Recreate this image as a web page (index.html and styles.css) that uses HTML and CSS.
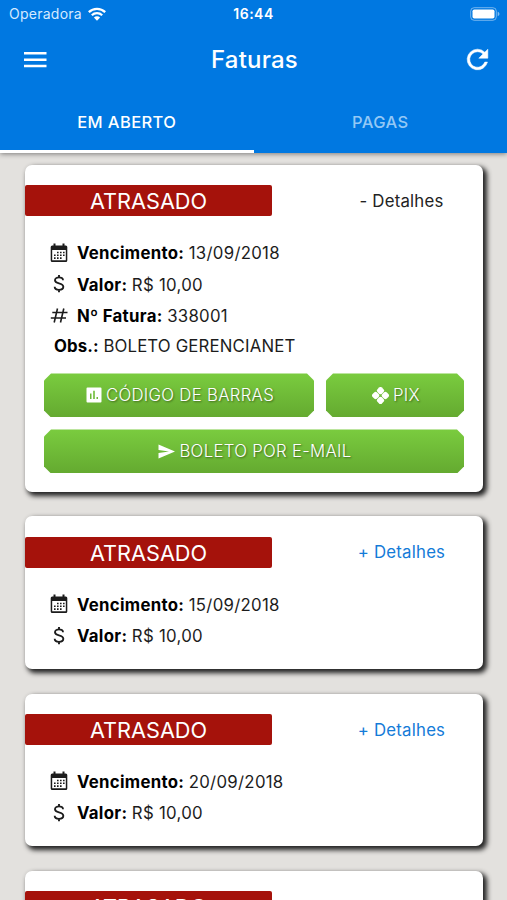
FILE: index.html
```html
<!DOCTYPE html>
<html lang="pt-BR">
<head>
  <meta charset="UTF-8">
  <meta name="viewport" content="width=device-width, initial-scale=1.0">
  <title>Faturas</title>
  <link rel="stylesheet" href="styles.css">
</head>
<body>
  <!-- Ícones usados em mais de um lugar -->
  <svg class="sprite">
    <symbol id="calendar" viewBox="0 0 18 20">
      <path fill-rule="evenodd" d="M3.500 .5h2v2h7v-2h2v2h1.300a1.500 1.500 0 0 1 1.500 1.500v13.500a1.500 1.500 0 0 1-1.500 1.500H2.200a1.500 1.500 0 0 1-1.500-1.500V4a1.500 1.500 0 0 1 1.500-1.500h1.300zM2.200 7v10.300h13.600V7z"/>
      <path d="M7 8.700h1.600v1.600H7zM10 8.700h1.600v1.600H10zM13 8.700h1.600v1.600H13zM4 11.500h1.600v1.600H4zM7 11.500h1.600v1.600H7zM10 11.500h1.600v1.600H10zM13 11.500h1.600v1.600H13zM4 14.300h1.600v1.600H4zM7 14.300h1.600v1.600H7zM10 14.300h1.600v1.600H10z"/>
    </symbol>
    <symbol id="dollar" viewBox="0 0 18 20">
      <path d="M13 6.200C13 4.400 11.300 3.400 9 3.400S5 4.500 5 6.300C5 8.300 6.900 8.900 9 9.400s4.300 1.200 4.300 3.400c0 1.900-1.900 3.100-4.300 3.100s-4.300-1.100-4.300-3.100M9 1v2.400M9 15.900v2.400" fill="none" stroke="currentColor" stroke-width="1.900"/>
    </symbol>
    <symbol id="hash" viewBox="0 0 18 20">
      <path d="M7.500 2.500l-3.300 14M13.800 2.500l-3.300 14M2.300 6.500H17.500M.8 12H16" fill="none" stroke="currentColor" stroke-width="1.600"/>
    </symbol>
  </svg>

  <header class="app-header">
    <div class="status-bar">
      <div class="carrier">
        <span>Operadora</span>
        <svg width="18" height="14" viewBox="0 0 18 14" fill="none" stroke="#fff" stroke-width="2.200">
          <path d="M.8 5.100a11.800 11.800 0 0 1 16.400 0M3.800 8.300a7.400 7.400 0 0 1 10.400 0"/>
          <path d="M9 13.700L5.900 10.600a4.400 4.400 0 0 1 6.200 0z" fill="#fff" stroke="none"/>
        </svg>
      </div>
      <span class="clock">16:44</span>
      <svg class="battery" width="30" height="14" viewBox="0 0 30 14">
        <rect x=".7" y=".7" width="25.600" height="12.600" rx="3.500" fill="none" stroke="#fff" stroke-opacity=".45"/>
        <rect x="2.500" y="2.500" width="22" height="9" rx="1.800" fill="#fff"/>
        <path d="M27.700 4.800c2.300.7 2.300 3.700 0 4.400z" fill="#fff" fill-opacity=".5"/>
      </svg>
    </div>

    <div class="toolbar">
      <svg width="24" height="16" viewBox="0 0 24 16" fill="#fff">
        <path d="M1 0h22.500v2.600H1zM1 6.400h22.500V9H1zM1 12.700h22.500v2.600H1z"/>
      </svg>
      <h1>Faturas</h1>
      <svg width="31" height="31" viewBox="0 0 24 24" fill="#fff" stroke="#fff" stroke-width=".4">
        <path d="M17.650 6.350A7.958 7.958 0 0 0 12 4a8 8 0 1 0 7.730 10h-2.080A6 6 0 1 1 12 6c1.660 0 3.140.69 4.220 1.780L13 11h7V4z"/>
      </svg>
    </div>

    <nav class="tabs">
      <a class="tab active">EM ABERTO</a>
      <a class="tab">PAGAS</a>
    </nav>
  </header>

  <main class="invoices">
    <article class="card">
      <div class="card-top">
        <span class="badge">ATRASADO</span>
        <span class="details open">- Detalhes</span>
      </div>
      <ul class="info">
        <li><svg><use href="#calendar"/></svg><b>Vencimento:</b> 13/09/2018</li>
        <li><svg><use href="#dollar"/></svg><b>Valor:</b> R$ 10,00</li>
        <li><svg><use href="#hash"/></svg><b>Nº Fatura:</b> 338001</li>
        <li class="obs"><b>Obs.:</b> BOLETO GERENCIANET</li>
      </ul>
      <div class="actions">
        <button class="btn">
          <svg width="16" height="16" viewBox="0 0 16 16">
            <path fill="#fff" fill-rule="evenodd" d="M1.500.5h13a1 1 0 0 1 1 1v13a1 1 0 0 1-1 1h-13a1 1 0 0 1-1-1v-13a1 1 0 0 1 1-1zM4 6.500V12h1.500V6.500zM7.200 3.700V12h1.600V3.700zM10.500 10v2H12v-2z"/>
          </svg>
          <span>CÓDIGO DE BARRAS</span>
        </button>
        <button class="btn">
          <svg width="17" height="17" viewBox="0 0 18 18" fill="#fff">
            <g transform="rotate(45 9 9)">
              <rect x="2" y="2" width="6.700" height="6.700" rx="2.200"/>
              <rect x="9.300" y="2" width="6.700" height="6.700" rx="2.200"/>
              <rect x="2" y="9.300" width="6.700" height="6.700" rx="2.200"/>
              <rect x="9.300" y="9.300" width="6.700" height="6.700" rx="2.200"/>
            </g>
          </svg>
          <span>PIX</span>
        </button>
        <button class="btn wide">
          <svg width="17" height="15" viewBox="0 0 17 15">
            <path fill="#fff" d="M.5.500L17 7.500.5 14.500V9L11 7.500.5 6z"/>
          </svg>
          <span>BOLETO POR E-MAIL</span>
        </button>
      </div>
    </article>

    <article class="card">
      <div class="card-top">
        <span class="badge">ATRASADO</span>
        <span class="details">+ Detalhes</span>
      </div>
      <ul class="info">
        <li><svg><use href="#calendar"/></svg><b>Vencimento:</b> 15/09/2018</li>
        <li><svg><use href="#dollar"/></svg><b>Valor:</b> R$ 10,00</li>
      </ul>
    </article>

    <article class="card">
      <div class="card-top">
        <span class="badge">ATRASADO</span>
        <span class="details">+ Detalhes</span>
      </div>
      <ul class="info">
        <li><svg><use href="#calendar"/></svg><b>Vencimento:</b> 20/09/2018</li>
        <li><svg><use href="#dollar"/></svg><b>Valor:</b> R$ 10,00</li>
      </ul>
    </article>

    <article class="card">
      <div class="card-top">
        <span class="badge">ATRASADO</span>
        <span class="details">+ Detalhes</span>
      </div>
    </article>
  </main>
</body>
</html>
```
FILE: styles.css
```css
* {
  box-sizing: border-box;
}

body {
  margin: 0;
  height: 100vh;
  overflow: hidden;
  display: flex;
  flex-direction: column;
  background: #e3e1de;
  color: #1c1c1c;
  font-family: 'Inter', sans-serif;
}

.sprite {
  display: none;
}

/* Cabeçalho */
.app-header {
  flex: none;
  height: 153px;
  background: #0078e1;
  color: #fff;
  box-shadow: 0 1px 5px rgba(0, 0, 0, 0.45);
}

.status-bar {
  display: grid;
  grid-template-columns: 1fr auto 1fr;
  align-items: center;
  height: 27px;
  padding: 0 7px 0 9px;
  font-size: 14px;
}

.carrier {
  display: flex;
  align-items: center;
  gap: 6px;
  letter-spacing: 0.25px;
  color: #d5eaff;
}

.clock {
  margin-right: 2px;
  font-weight: 600;
  letter-spacing: 0.5px;
}

.battery {
  justify-self: end;
}

.toolbar {
  display: flex;
  align-items: center;
  justify-content: space-between;
  height: 65px;
  padding: 0 14px 0 23px;
}

.toolbar h1 {
  margin: 0;
  font-size: 24px;
  font-weight: 500;
  letter-spacing: 0.2px;
}

.tabs {
  display: grid;
  grid-template-columns: 1fr 1fr;
  height: 61px;
}

.tab {
  display: flex;
  align-items: center;
  justify-content: center;
  padding-top: 1px;
  border-bottom: 3px solid transparent;
  font-size: 16.500px;
  font-weight: 500;
  letter-spacing: 0.4px;
  color: #94c8f5;
}

.tab.active {
  color: #fff;
  border-color: #fff;
}

/* Lista de faturas */
.invoices {
  flex: 1;
  min-height: 0;
  overflow: hidden;
  display: flex;
  flex-direction: column;
  gap: 24.800px;
  padding: 12px 24px 0 25px;
}

.card {
  flex: none;
  padding: 20.300px 0 17.200px;
  background: #fff;
  border-radius: 7px;
  box-shadow: 3px 3px 5px 1px #222;
}

.card-top {
  display: flex;
  align-items: center;
}

.badge {
  width: 247px;
  height: 31px;
  line-height: 32px;
  border-radius: 2px;
  background: #a5120b;
  color: #fff;
  font-size: 21.700px;
  text-align: center;
}

.details {
  flex: 1;
  padding-left: 48px;
  text-align: center;
  font-size: 16.800px;
  line-height: 20px;
  letter-spacing: 0.2px;
  color: #147bd8;
}

.details.open {
  color: #222;
}

.info {
  list-style: none;
  margin: 0;
  padding: 21px 0 0 25px;
  font-size: 16.800px;
  letter-spacing: 0.290px;
}

.info li {
  display: flex;
  align-items: center;
  gap: 4.500px;
  height: 31.500px;
}

.info svg {
  width: 18px;
  height: 20px;
  margin-right: 4.500px;
  margin-bottom: 1px;
  fill: currentColor;
}

.info b {
  font-weight: 700;
  color: #000;
}

.info .obs {
  height: 28px;
  padding-left: 4px;
  letter-spacing: 0.150px;
}

.actions {
  display: grid;
  grid-template-columns: 270px 1fr;
  gap: 12px;
  padding: 13.700px 19px 1px;
}

.btn {
  display: flex;
  align-items: center;
  justify-content: center;
  gap: 4px;
  height: 44px;
  padding: 0 0 0 2px;
  border: none;
  background: linear-gradient(#7acc3f, #64aa30);
  clip-path: polygon(7px 0, calc(100% - 7px) 0, 100% 7px, 100% calc(100% - 7px), calc(100% - 7px) 100%, 7px 100%, 0 calc(100% - 7px), 0 7px);
  color: #fff;
  font-family: inherit;
  font-size: 16.800px;
  font-weight: 300;
  letter-spacing: 0.290px;
  text-shadow: 1px 1px 2px rgba(0, 0, 0, 0.45);
}

.wide {
  grid-column: span 2;
}
```
